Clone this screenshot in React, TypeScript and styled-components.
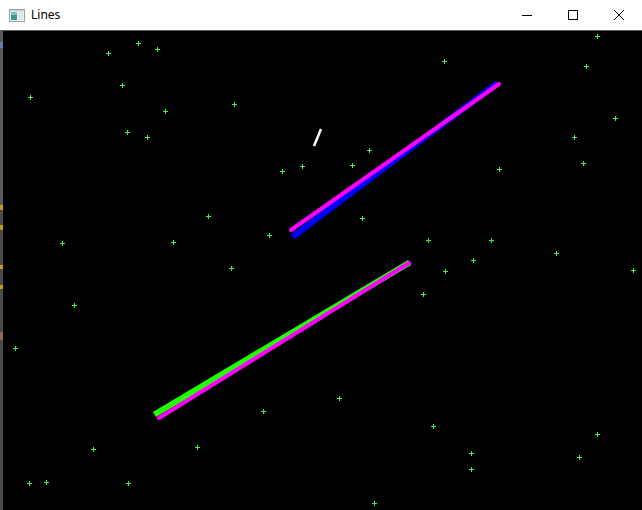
import React from "react";
import styled, { createGlobalStyle } from "styled-components";

const Global = createGlobalStyle`
  html, body { margin: 0; padding: 0; background: #000; overflow: hidden; }
  #root { width: 642px; height: 510px; }
`;

const Window = styled.div`
  width: 642px;
  height: 510px;
  display: flex;
  flex-direction: column;
  background: #fff;
  font-family: "Noto Sans", "Open Sans", "Liberation Sans", sans-serif;
`;

const TitleBar = styled.div`
  height: 30px;
  flex: none;
  display: flex;
  align-items: center;
  background: #fff;
`;

const AppIcon = styled.svg`
  width: 16px;
  height: 13px;
  margin-left: 9px;
  margin-right: 6px;
  flex: none;
`;

const Title = styled.span`
  font-size: 12px;
  color: #000;
  line-height: 1;
  flex: 1;
  padding-bottom: 1px;
`;

const Controls = styled.div`
  display: flex;
  height: 100%;
`;

const CtrlButton = styled.div`
  width: 46px;
  height: 30px;
  display: flex;
  align-items: center;
  justify-content: center;
`;

const Body = styled.div`
  flex: 1;
  display: flex;
  min-height: 0;
`;

const LeftEdge = styled.div`
  width: 3px;
  flex: none;
  background:
    linear-gradient(
      to bottom,
      #5a5a5a 0px, #5a5a5a 12px,
      #6a7aa8 12px, #6a7aa8 18px,
      #5a5a5a 18px, #5a5a5a 175px,
      #c89a12 175px, #c89a12 180px,
      #4a4a4a 180px, #4a4a4a 195px,
      #c89a12 195px, #c89a12 200px,
      #4a4a4a 200px, #4a4a4a 235px,
      #c89a12 235px, #c89a12 239px,
      #4a4a4a 239px, #4a4a4a 255px,
      #c89a12 255px, #c89a12 259px,
      #4a4a4a 259px, #4a4a4a 302px,
      #8a6a5a 302px, #8a6a5a 310px,
      #4a4a4a 310px, #4a4a4a 100%
    );
`;

const Canvas = styled.div`
  flex: 1;
  background: #000;
  border-top: 1px solid #5f5f5f;
  display: flex;
`;

const Drawing = styled.svg`
  width: 100%;
  height: 100%;
  display: block;
`;

const dots: [number, number][] = [
  [138, 43], [108, 53], [157, 49], [122, 85], [30, 97], [165, 111], [127, 132], [147, 137],
  [234, 104], [282, 171], [302, 166], [352, 165], [369, 150],
  [597, 36], [444, 61], [586, 66], [615, 118], [574, 137], [583, 163], [499, 169],
  [208, 216], [62, 243], [173, 242], [74, 305], [15, 348],
  [362, 218], [269, 235], [231, 268],
  [428, 240], [491, 240], [473, 260], [445, 271], [423, 294], [556, 253], [633, 270],
  [339, 398], [263, 411], [433, 426], [597, 434], [471, 453], [579, 457], [471, 469],
  [93, 449], [197, 447], [29, 483], [46, 482], [128, 483], [374, 503],
];

export default function App() {
  return (
    <>
      <Global />
      <Window>
        <TitleBar>
          <AppIcon viewBox="0 0 16 13">
            <rect x="0.5" y="0.5" width="15" height="12" fill="#f4f4f4" stroke="#a0a0a0" />
            <rect x="2" y="3" width="6" height="8" fill="#3a9a8a" />
            <rect x="2" y="3" width="6" height="3" fill="#7cc4c0" />
            <rect x="9" y="3" width="5" height="8" fill="#dfe6ea" />
            <rect x="1" y="1" width="14" height="1.5" fill="#c8d0d8" />
          </AppIcon>
          <Title>Lines</Title>
          <Controls>
            <CtrlButton>
              <svg width="10" height="10" viewBox="0 0 10 10">
                <line x1="0" y1="5.5" x2="10" y2="5.5" stroke="#000" strokeWidth="1" />
              </svg>
            </CtrlButton>
            <CtrlButton>
              <svg width="10" height="10" viewBox="0 0 10 10">
                <rect x="0.5" y="0.5" width="9" height="9" fill="none" stroke="#000" strokeWidth="1" />
              </svg>
            </CtrlButton>
            <CtrlButton>
              <svg width="10" height="10" viewBox="0 0 10 10">
                <path d="M0 0 L10 10 M10 0 L0 10" stroke="#000" strokeWidth="1" />
              </svg>
            </CtrlButton>
          </Controls>
        </TitleBar>
        <Body>
          <LeftEdge />
          <Canvas>
            <Drawing viewBox="3 31 639 479" preserveAspectRatio="none">
              {dots.map(([x, y], i) => (
                <path
                  key={i}
                  d={`M${x - 2} ${y + 0.5} H${x + 3} M${x + 0.5} ${y - 2} V${y + 3}`}
                  stroke="#44f044"
                  strokeWidth="1.3"
                  shapeRendering="crispEdges"
                />
              ))}
              <line x1="295" y1="235" x2="495" y2="85" stroke="#0000ff" strokeWidth="6" strokeLinecap="square" />
              <line x1="291" y1="230" x2="499" y2="84" stroke="#ff00ff" strokeWidth="4" strokeLinecap="round" />
              <line x1="157" y1="413" x2="407" y2="264" stroke="#22ff00" strokeWidth="6" strokeLinecap="square" />
              <line x1="159" y1="418" x2="409" y2="263" stroke="#ff00ff" strokeWidth="4" strokeLinecap="round" />
              <line x1="314" y1="146" x2="321" y2="129" stroke="#ffffff" strokeWidth="2.5" />
            </Drawing>
          </Canvas>
        </Body>
      </Window>
    </>
  );
}
